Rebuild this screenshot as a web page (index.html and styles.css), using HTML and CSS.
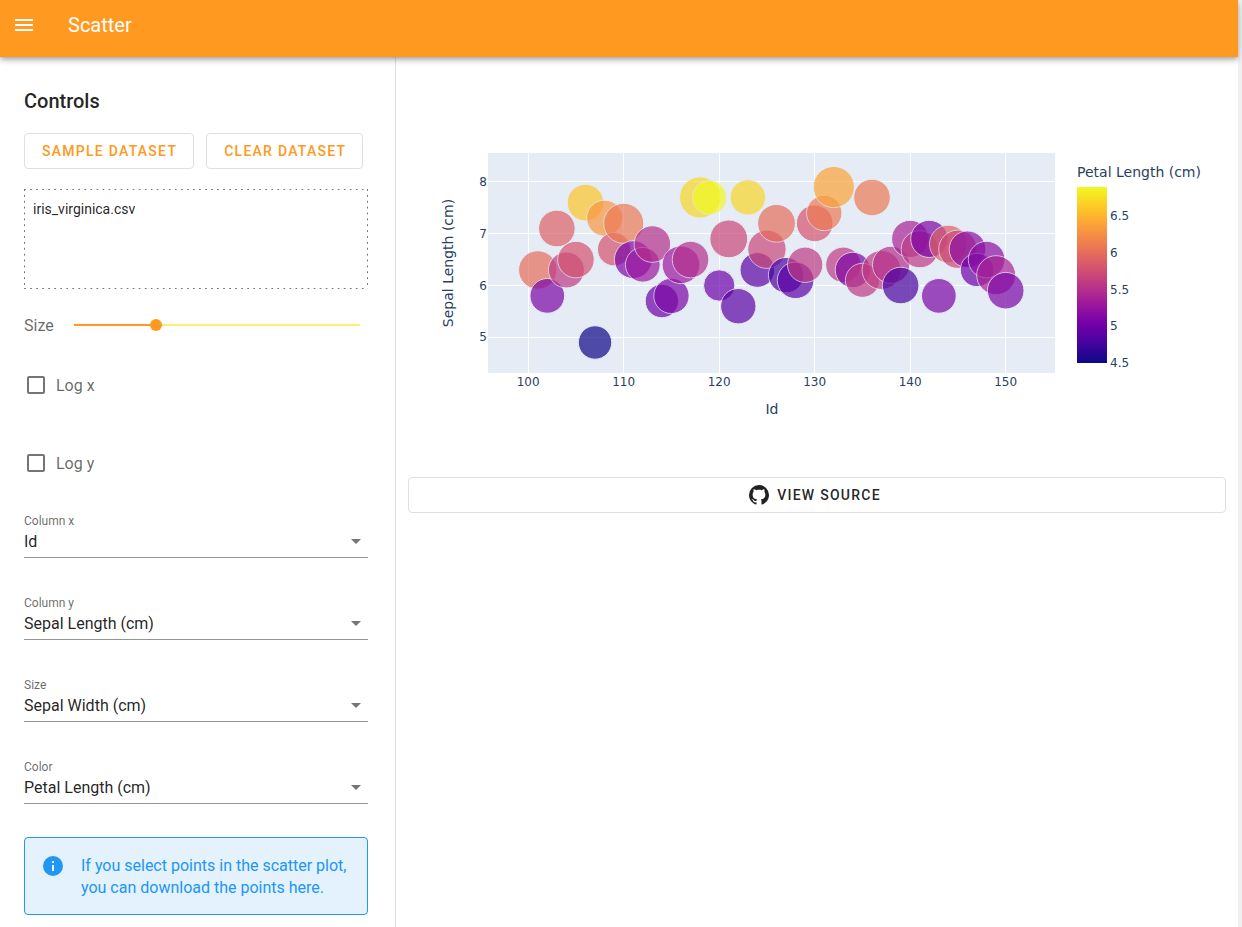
FILE: index.html
```html
<!DOCTYPE html>
<html lang="en">
<head>
<meta charset="utf-8">
<meta name="viewport" content="width=device-width, initial-scale=1">
<title>Scatter</title>
<link rel="stylesheet" href="styles.css">
</head>
<body>
<div class="page">
  <header class="app-bar">
    <button class="menu-button" type="button" aria-label="Menu">
      <svg class="icon" viewBox="0 0 24 24"><path d="M3,6H21V8H3V6M3,11H21V13H3V11M3,16H21V18H3V16Z"/></svg>
    </button>
    <h1 class="app-title">Scatter</h1>
  </header>
  <div class="layout">
    <aside class="sidebar">
      <h2 class="sidebar-title">Controls</h2>
      <div class="button-row">
        <button class="btn btn-primary" type="button">SAMPLE DATASET</button>
        <button class="btn btn-primary" type="button">CLEAR DATASET</button>
      </div>
      <div class="drop-zone">iris_virginica.csv</div>
      <div class="slider-row">
        <label for="size">Size</label>
        <input class="slider" id="size" type="range" min="0" max="100" value="28">
      </div>
      <div class="check-row">
        <input class="check" id="logx" type="checkbox">
        <label for="logx">Log x</label>
      </div>
      <div class="check-row">
        <input class="check" id="logy" type="checkbox">
        <label for="logy">Log y</label>
      </div>
      <div class="fields">
        <div class="field">
          <label class="field-label" for="colx">Column x</label>
          <div class="select-wrap">
            <select class="select" id="colx"><option>Id</option></select>
            <svg class="icon arrow" viewBox="0 0 24 24"><path d="M7,10L12,15L17,10H7Z"/></svg>
          </div>
        </div>
        <div class="field">
          <label class="field-label" for="coly">Column y</label>
          <div class="select-wrap">
            <select class="select" id="coly"><option>Sepal Length (cm)</option></select>
            <svg class="icon arrow" viewBox="0 0 24 24"><path d="M7,10L12,15L17,10H7Z"/></svg>
          </div>
        </div>
        <div class="field">
          <label class="field-label" for="colsize">Size</label>
          <div class="select-wrap">
            <select class="select" id="colsize"><option>Sepal Width (cm)</option></select>
            <svg class="icon arrow" viewBox="0 0 24 24"><path d="M7,10L12,15L17,10H7Z"/></svg>
          </div>
        </div>
        <div class="field">
          <label class="field-label" for="colcolor">Color</label>
          <div class="select-wrap">
            <select class="select" id="colcolor"><option>Petal Length (cm)</option></select>
            <svg class="icon arrow" viewBox="0 0 24 24"><path d="M7,10L12,15L17,10H7Z"/></svg>
          </div>
        </div>
      </div>
      <div class="alert" role="note">
        <svg class="icon" viewBox="0 0 24 24"><path d="M13,9H11V7H13M13,17H11V11H13M12,2A10,10 0 0,0 2,12A10,10 0 0,0 12,22A10,10 0 0,0 22,12A10,10 0 0,0 12,2Z"/></svg>
        <p class="alert-text">If you select points in the scatter plot, you can download the points here.</p>
      </div>
    </aside>
    <main class="content">
      <svg class="chart" viewBox="0 0 818 396" role="img" aria-label="Sepal length by id, coloured by petal length">
        <defs>
          <linearGradient id="plasma" x1="0" y1="1" x2="0" y2="0"></linearGradient>
        </defs>
        <rect class="plot-bg" x="80" y="84" width="567" height="220"/>
        <g id="grid" class="grid"></g>
        <g id="points" class="points"></g>
        <g id="ticks" class="ticks"></g>
        <text class="axis-title" x="364" y="345" text-anchor="middle">Id</text>
        <text class="axis-title" transform="translate(45 194) rotate(-90)" text-anchor="middle">Sepal Length (cm)</text>
        <text class="axis-title" x="669" y="108">Petal Length (cm)</text>
        <rect x="669" y="118" width="30" height="176" fill="url(#plasma)"/>
      </svg>
      <a class="btn btn-block" href="#source">
        <svg class="icon" viewBox="0 0 24 24"><path d="M12,2A10,10 0 0,0 2,12C2,16.42 4.87,20.17 8.84,21.5C9.34,21.58 9.5,21.27 9.5,21C9.5,20.77 9.5,20.14 9.5,19.31C6.73,19.91 6.14,17.97 6.14,17.97C5.68,16.81 5.03,16.5 5.03,16.5C4.12,15.88 5.1,15.9 5.1,15.9C6.1,15.97 6.63,16.93 6.63,16.93C7.5,18.45 8.97,18 9.54,17.76C9.63,17.11 9.89,16.67 10.17,16.42C7.95,16.17 5.62,15.31 5.62,11.5C5.62,10.39 6,9.5 6.65,8.79C6.55,8.54 6.2,7.5 6.75,6.15C6.75,6.15 7.59,5.88 9.5,7.17C10.29,6.95 11.15,6.84 12,6.84C12.85,6.84 13.71,6.95 14.5,7.17C16.41,5.88 17.25,6.15 17.25,6.15C17.8,7.5 17.45,8.54 17.35,8.79C18,9.5 18.38,10.39 18.38,11.5C18.38,15.32 16.04,16.16 13.81,16.41C14.17,16.72 14.5,17.33 14.5,18.26C14.5,19.6 14.5,20.68 14.5,21C14.5,21.27 14.66,21.59 15.17,21.5C19.14,20.16 22,16.42 22,12A10,10 0 0,0 12,2Z"/></svg>
        <span>VIEW SOURCE</span>
      </a>
    </main>
  </div>
</div>
<script src="chart.js"></script>
</body>
</html>
```
FILE: styles.css
```css
* { box-sizing: border-box; }

body {
  margin: 0;
  background: #f0f0f0;
  font-family: Roboto, sans-serif;
  font-size: 16px;
  color: rgba(0, 0, 0, 0.87);
}

.page {
  display: flex;
  flex-direction: column;
  min-height: 100vh;
  margin-right: 4px;
  background: #fff;
}

.icon {
  width: 24px;
  height: 24px;
  flex: none;
  fill: currentColor;
}

.app-bar {
  display: flex;
  align-items: center;
  gap: 32px;
  height: 57px;
  padding: 0 12px 7px;
  background: #ff9920;
  color: #fff;
  z-index: 1;
  box-shadow: 0 2px 4px -1px rgba(0, 0, 0, 0.2), 0 4px 5px rgba(0, 0, 0, 0.14), 0 1px 10px rgba(0, 0, 0, 0.12);
}

.menu-button {
  display: flex;
  padding: 0;
  border: 0;
  background: none;
  color: inherit;
}

.app-title {
  margin: 0;
  font-size: 20px;
  font-weight: 400;
}

.layout {
  display: flex;
  flex: 1;
}

.sidebar {
  width: 396px;
  flex: none;
  padding: 28px 27px 12px 24px;
  border-right: 1px solid #e0e0e0;
}

.sidebar-title {
  margin: 0 0 16px;
  font-size: 20px;
  line-height: 32px;
  font-weight: 500;
}

.button-row {
  display: flex;
  gap: 12px;
  margin-bottom: 20px;
}

.btn {
  display: flex;
  align-items: center;
  justify-content: center;
  height: 36px;
  padding: 0 17px;
  border: 1px solid #e0e0e0;
  border-radius: 4px;
  background: #fff;
  color: rgba(0, 0, 0, 0.87);
  font: 500 14px Roboto, sans-serif;
  letter-spacing: 0.09em;
  text-decoration: none;
  white-space: nowrap;
}

.btn-primary { padding: 0 16px 0 17px; color: #ff9920; }

.btn-block { gap: 6px; padding: 0 20px 0 14px; }

/* Sparse dashes: 2px on, 4px off along each edge */
.drop-zone {
  height: 100px;
  padding: 9px;
  background:
    linear-gradient(to right, #777 2px, transparent 2px) top / 6px 1px round no-repeat,
    linear-gradient(to right, #777 2px, transparent 2px) bottom / 6px 1px round no-repeat,
    linear-gradient(#777 2px, transparent 2px) left / 1px 6px no-repeat round,
    linear-gradient(#777 2px, transparent 2px) right / 1px 6px no-repeat round;
  font-size: 14px;
  line-height: 22px;
}

.slider-row {
  display: flex;
  align-items: center;
  gap: 20px;
  height: 32px;
  margin: 20px 8px 28px 0;
  color: rgba(0, 0, 0, 0.6);
}

.slider {
  flex: 1;
  min-width: 0;
  height: 12px;
  margin: 0;
  appearance: none;
  background: linear-gradient(to right, #ff9920 29%, #ffee70 29%) center / 100% 2px no-repeat;
}

.slider::-webkit-slider-thumb {
  appearance: none;
  width: 12px;
  height: 12px;
  border-radius: 50%;
  background: #ff9920;
}

.check-row {
  display: flex;
  align-items: center;
  gap: 11px;
  height: 32px;
  margin-bottom: 46px;
  padding-left: 3px;
  color: rgba(0, 0, 0, 0.6);
}

.check {
  width: 18px;
  height: 18px;
  margin: 0;
  appearance: none;
  border: 2px solid #757575;
  border-radius: 2px;
}

.fields {
  display: flex;
  flex-direction: column;
  gap: 37px;
  margin-top: -12px;
}

.field-label {
  display: block;
  font-size: 12px;
  line-height: 16px;
  color: rgba(0, 0, 0, 0.6);
}

.select-wrap {
  display: flex;
  align-items: center;
  padding-bottom: 4px;
  border-bottom: 1px solid #949494;
  color: #757575;
}

.select {
  flex: 1;
  min-width: 0;
  height: 24px;
  margin-right: -24px;
  padding: 0 24px 0 0;
  appearance: none;
  border: 0;
  background: none;
  color: rgba(0, 0, 0, 0.87);
  font: 16px Roboto, sans-serif;
}

.arrow { pointer-events: none; }

.alert {
  display: flex;
  gap: 16px;
  margin-top: 33px;
  padding: 16px 16px 15px;
  border: 1px solid #2196f3;
  border-radius: 4px;
  background: #e4f2fd;
  color: #2196f3;
}

.alert-text {
  margin: 0;
  padding-top: 1px;
  line-height: 22px;
}

.content {
  flex: 1;
  min-width: 0;
  padding: 12px;
}

.chart {
  display: block;
  width: 100%;
  margin-bottom: 12px;
  font-family: "DejaVu Sans", sans-serif;
  fill: #2a3f5f;
}

.plot-bg { fill: #e5ecf6; }
.grid { stroke: #fff; stroke-width: 1px; }
.points circle { stroke: #e5ecf6; stroke-width: 1px; opacity: 0.7; }
.ticks { font-size: 12px; }
.axis-title { font-size: 14px; }
```
FILE: chart.js
```js
// Iris virginica, ids 101-150: sepal length, sepal width, petal length
const rows = [
  [6.3,3.3,6.0],[5.8,2.7,5.1],[7.1,3.0,5.9],[6.3,2.9,5.6],[6.5,3.0,5.8],
  [7.6,3.0,6.6],[4.9,2.5,4.5],[7.3,2.9,6.3],[6.7,2.5,5.8],[7.2,3.6,6.1],
  [6.5,3.2,5.1],[6.4,2.7,5.3],[6.8,3.0,5.5],[5.7,2.5,5.0],[5.8,2.8,5.1],
  [6.4,3.2,5.3],[6.5,3.0,5.5],[7.7,3.8,6.7],[7.7,2.6,6.9],[6.0,2.2,5.0],
  [6.9,3.2,5.7],[5.6,2.8,4.9],[7.7,2.8,6.7],[6.3,2.7,4.9],[6.7,3.3,5.7],
  [7.2,3.2,6.0],[6.2,2.8,4.8],[6.1,3.0,4.9],[6.4,2.8,5.6],[7.2,3.0,5.8],
  [7.4,2.8,6.1],[7.9,3.8,6.4],[6.4,2.8,5.6],[6.3,2.8,5.1],[6.1,2.6,5.6],
  [7.7,3.0,6.1],[6.3,3.4,5.6],[6.4,3.1,5.5],[6.0,3.0,4.8],[6.9,3.1,5.4],
  [6.7,3.1,5.6],[6.9,3.1,5.1],[5.8,2.7,5.1],[6.8,3.2,5.9],[6.7,3.3,5.7],
  [6.7,3.0,5.2],[6.3,2.5,5.0],[6.5,3.0,5.2],[6.2,3.4,5.4],[5.9,3.0,5.1]
];
const plasma = [[13,8,135],[70,3,159],[114,1,168],[156,23,158],[189,55,134],
  [216,87,107],[237,121,83],[251,159,58],[253,202,38],[240,249,33]];

const x = id => 120.2 + (id - 100) * 9.55;
const y = v => 112.9 + (8 - v) * 51.8;
const color = v => {
  const t = (v - 4.5) / 2.4 * 9;
  const i = Math.min(8, Math.floor(t));
  return `rgb(${plasma[i].map((c, k) => Math.round(c + (plasma[i + 1][k] - c) * (t - i)))})`;
};
const add = (parent, name, attrs, text) => {
  const el = document.createElementNS("http://www.w3.org/2000/svg", name);
  for (const key in attrs) el.setAttribute(key, attrs[key]);
  if (text) el.textContent = text;
  document.getElementById(parent).appendChild(el);
};

plasma.forEach((c, i) => add("plasma", "stop", { offset: i / 9, "stop-color": `rgb(${c})` }));

for (let id = 100; id <= 150; id += 10) {
  const gx = Math.floor(x(id)) + 0.5;
  add("grid", "line", { x1: gx, x2: gx, y1: 84, y2: 304 });
  add("ticks", "text", { x: x(id), y: 317, "text-anchor": "middle" }, String(id));
}
for (let v = 5; v <= 8; v++) {
  const gy = Math.floor(y(v)) + 0.5;
  add("grid", "line", { x1: 80, x2: 647, y1: gy, y2: gy });
  add("ticks", "text", { x: 79, y: y(v) + 4, "text-anchor": "end" }, String(v));
}
[4.5, 5, 5.5, 6, 6.5].forEach(v =>
  add("ticks", "text", { x: 702, y: 298 - (v - 4.5) / 2.4 * 176 }, String(v)));

rows.forEach(([length, width, petal], i) => add("points", "circle", {
  cx: x(101 + i), cy: y(length), r: 20.6 * Math.sqrt(width / 3.8), fill: color(petal)
}));
```
